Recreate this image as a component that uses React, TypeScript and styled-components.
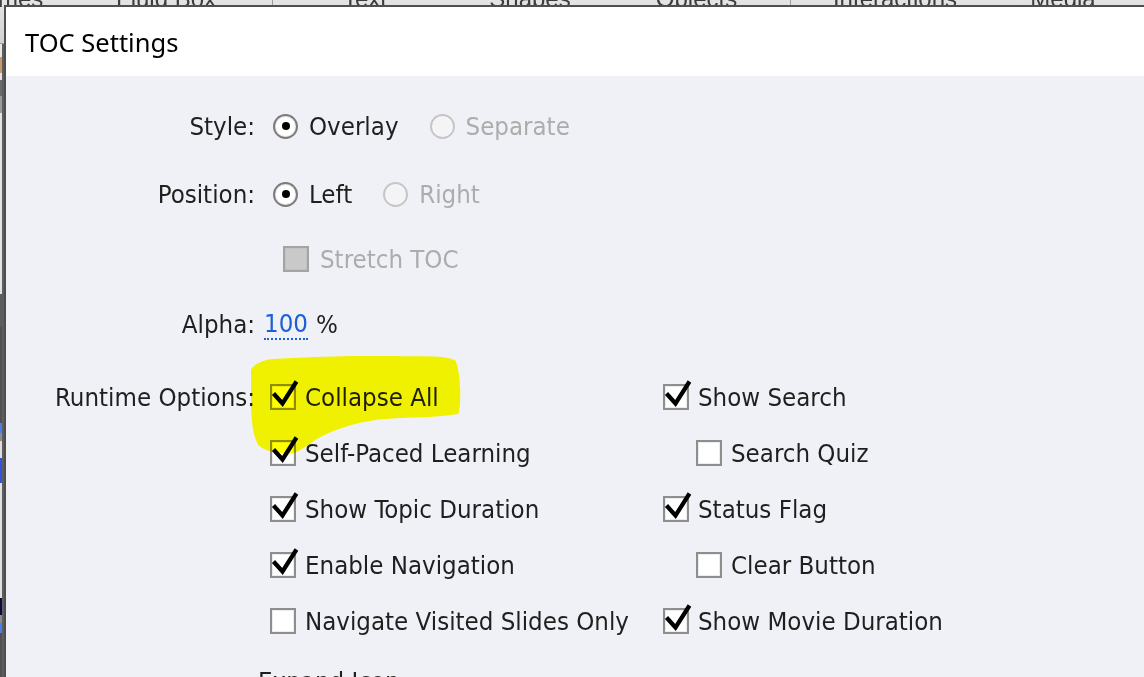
import React from 'react';
import styled, {createGlobalStyle} from 'styled-components';

const GlobalStyle = createGlobalStyle`
  html, body {
    margin: 0;
    padding: 0;
  }
  body {
    width: 1144px;
    height: 677px;
    overflow: hidden;
    background: #d8d8d8;
    font-family: "DejaVu Sans Condensed", "DejaVu Sans", sans-serif;
  }
`

const Screen = styled.div`
  position: relative;
  width: 1144px;
  height: 677px;
  overflow: hidden;
  display: grid;
  grid-template-rows: 44px 1fr;
  grid-template-columns: 4px 1fr;
`

// app ribbon behind the dialog, only its bottom edge shows
const Ribbon = styled.div`
  grid-column: 1 / 3;
  display: flex;
  align-items: flex-start;
  margin-left: -60px;
  background: linear-gradient(#e4e4e4, #d2d2d2);
  border-bottom: 1px solid #9a9a9a;
  overflow: hidden;
`
const Tab = styled.div<{$w: number; $sep?: boolean}>`
  flex: none;
  width: ${p => p.$w}px;
  height: 100%;
  box-sizing: border-box;
  border-right: ${p => p.$sep ? '1px solid #9c9c9c' : 'none'};
  margin-top: -13px;
  text-align: center;
  font-family: "Liberation Sans", Arial, sans-serif;
  font-size: 24px;
  line-height: 24px;
  color: #3c3c3c;
`

const LeftRail = styled.div`
  display: flex;
  flex-direction: column;
  border-right: 2px solid #5e5e5e;
`
const Segment = styled.div<{$h: number; $c: string}>`
  flex: none;
  height: ${p => p.$h}px;
  background: ${p => p.$c};
`

const Dialog = styled.div`
  position: absolute;
  left: 4px;
  top: 5px;
  right: -20px;
  bottom: -20px;
  border: 2px solid #4e4e4e;
  display: flex;
  flex-direction: column;
  background: #f0f1f7;
`
const TitleBar = styled.div`
  height: 69px;
  flex: none;
  display: flex;
  align-items: center;
  padding: 0 0 0 19px;
  box-sizing: border-box;
  background: #ffffff;
  font-family: "Noto Sans", "Open Sans", sans-serif;
  font-size: 25.5px;
  color: #000;
`
const Body = styled.div`
  position: relative;
  flex: 1;
  padding-top: 30px;
  color: #1f1f1f;
  font-size: 25.6px;
`
const Row = styled.div<{$h: number; $mt?: number}>`
  display: grid;
  grid-template-columns: 249px 1fr;
  column-gap: 15px;
  align-items: center;
  height: ${p => p.$h}px;
  margin-top: ${p => p.$mt ?? 0}px;
`
const Label = styled.div<{$top?: boolean}>`
  text-align: right;
  white-space: nowrap;
  align-self: ${p => p.$top ? 'start' : 'center'};
  line-height: ${p => p.$top ? '56px' : 'normal'};
`
const Controls = styled.div<{$ml?: number}>`
  display: flex;
  align-items: center;
  gap: 31px;
  margin-left: ${p => p.$ml ?? 0}px;
  white-space: nowrap;
`
const Choice = styled.span<{$disabled?: boolean; $gap?: number}>`
  display: inline-flex;
  align-items: center;
  gap: ${p => p.$gap ?? 11}px;
  color: ${p => p.$disabled ? '#acacac' : 'inherit'};
`
const RadioDot = styled.span<{$on?: boolean; $disabled?: boolean}>`
  flex: none;
  width: 21px;
  height: 21px;
  border-radius: 50%;
  border: 2px solid ${p => p.$disabled ? '#c6c6c8' : '#7c7c7c'};
  background: ${p => p.$disabled ? '#f4f4f6' : '#ffffff'};
  box-shadow: inset 0 0 0 1px ${p => p.$disabled ? '#f8f8f8' : '#e6e6e6'};
  display: grid;
  place-items: center;
  &::after {
    content: '';
    display: ${p => p.$on ? 'block' : 'none'};
    width: 8px;
    height: 8px;
    border-radius: 50%;
    background: #000;
  }
`
const Box = styled.span<{$disabled?: boolean}>`
  position: relative;
  flex: none;
  width: 22px;
  height: 22px;
  border: 2px solid ${p => p.$disabled ? '#a4a4a4' : '#8e8e8e'};
  background: ${p => p.$disabled ? '#c9c9c9' : '#ffffff'};
  box-shadow: inset 0 0 0 1px ${p => p.$disabled ? '#c2c2c2' : '#ececec'};
`
const Tick = styled.svg`
  position: absolute;
  left: -2px;
  top: -2px;
  overflow: visible;
`
const Value = styled.span`
  color: #1c5fd6;
  border-bottom: 2px dotted #1c5fd6;
  line-height: 30px;
`
const Unit = styled.span`
  margin-left: -23px;
`
const OptionGrid = styled.div`
  display: grid;
  grid-template-columns: 393px auto;
  grid-auto-rows: 56px;
  align-items: center;
`
const Option = styled.span<{$indent?: boolean}>`
  display: inline-flex;
  align-items: center;
  gap: 9px;
  white-space: nowrap;
  margin-left: ${p => p.$indent ? 33 : 0}px;
`
const Highlight = styled.svg`
  position: absolute;
  left: 244px;
  top: 280px;
  mix-blend-mode: multiply;
  pointer-events: none;
`

const Radio: React.FC<{on?: boolean; disabled?: boolean; label: string}> = ({on, disabled, label}) => (
  <Choice $disabled={disabled}>
    <RadioDot $on={on} $disabled={disabled}/>
    {label}
  </Choice>
)

const Check: React.FC<{on?: boolean; disabled?: boolean}> = ({on, disabled}) => (
  <Box $disabled={disabled}>
    {on && (
      <Tick width="26" height="26" viewBox="0 0 26 26">
        <path d="M3.5 9.5 L12.5 19.5 L26.5 -2.5" fill="none" stroke="#000" strokeWidth="4.2"/>
      </Tick>
    )}
  </Box>
)

const options: {label: string; on: boolean; indent?: boolean}[] = [
  {label: 'Collapse All', on: true},
  {label: 'Show Search', on: true},
  {label: 'Self-Paced Learning', on: true},
  {label: 'Search Quiz', on: false, indent: true},
  {label: 'Show Topic Duration', on: true},
  {label: 'Status Flag', on: true},
  {label: 'Enable Navigation', on: true},
  {label: 'Clear Button', on: false, indent: true},
  {label: 'Navigate Visited Slides Only', on: false},
  {label: 'Show Movie Duration', on: true},
]

const rail: [number, string][] = [
  [13, '#e6e6e6'], [16, '#c89a6a'], [7, '#e2e2e2'], [16, '#6a6a6a'], [17, '#9a9a9a'],
  [181, '#e2e2e2'], [33, '#5c5c5c'], [96, '#505058'], [10, '#4a80ee'], [8, '#8c8c8c'],
  [17, '#dedede'], [25, '#3352e0'], [115, '#e0e0e0'], [17, '#0a0c40'], [8, '#8a8a8a'],
  [10, '#4a80ee'], [60, '#505058'],
]

export default function App() {
  return (
    <>
      <GlobalStyle/>
      <Screen>
        <Ribbon>
          <Tab $w={120}>Themes</Tab>
          <Tab $w={213} $sep>Fluid Box</Tab>
          <Tab $w={184}>Text</Tab>
          <Tab $w={146}>Shapes</Tab>
          <Tab $w={188} $sep>Objects</Tab>
          <Tab $w={208}>Interactions</Tab>
          <Tab $w={128}>Media</Tab>
        </Ribbon>
        <LeftRail>
          {rail.map(([h, c], i) => <Segment key={i} $h={h} $c={c}/>)}
        </LeftRail>
        <div/>
        <Dialog>
          <TitleBar>TOC Settings</TitleBar>
          <Body>
            <Row $h={40}>
              <Label>Style:</Label>
              <Controls $ml={3}>
                <Radio on label="Overlay"/>
                <Radio disabled label="Separate"/>
              </Controls>
            </Row>
            <Row $h={40} $mt={28}>
              <Label>Position:</Label>
              <Controls $ml={3}>
                <Radio on label="Left"/>
                <Radio disabled label="Right"/>
              </Controls>
            </Row>
            <Row $h={40} $mt={25}>
              <Label/>
              <Controls $ml={13}>
                <Choice $disabled $gap={11}>
                  <Check disabled/>
                  Stretch TOC
                </Choice>
              </Controls>
            </Row>
            <Row $h={40} $mt={25}>
              <Label>Alpha:</Label>
              <Controls $ml={-6}>
                <Value>100</Value>
                <Unit>%</Unit>
              </Controls>
            </Row>
            <Row $h={280} $mt={25}>
              <Label $top>Runtime Options:</Label>
              <OptionGrid>
                {options.map(o => (
                  <Option key={o.label} $indent={o.indent}>
                    <Check on={o.on}/>
                    {o.label}
                  </Option>
                ))}
              </OptionGrid>
            </Row>
            <Row $h={56} $mt={4}>
              <Label/>
              <Controls $ml={-12}>Expand Icon:</Controls>
            </Row>
            <Highlight width="212" height="98" viewBox="0 0 212 98">
              <path
                d="M3 14 C8 8 14 6 22 5 C60 3 110 1 150 2 C180 2 196 2 204 6 C209 20 209 45 207 56 C190 60 150 59 125 62 C105 65 88 70 72 78 C60 84 52 92 44 95 C30 96 18 95 10 88 C4 78 3 60 3 45 Z"
                fill="#ffff00"
                stroke="#ffff00"
                strokeWidth="4"
                strokeLinejoin="round"
              />
            </Highlight>
          </Body>
        </Dialog>
      </Screen>
    </>
  );
}
